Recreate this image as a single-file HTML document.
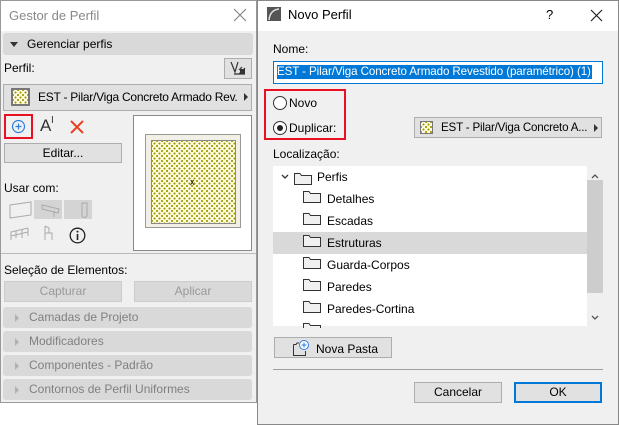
<!DOCTYPE html>
<html><head><meta charset="utf-8"><style>
*{box-sizing:border-box;margin:0;padding:0}
body{width:619px;height:425px;background:#fff;font-family:"Liberation Sans",sans-serif;font-size:12px;color:#000;position:relative;overflow:hidden}
.a{position:absolute}
.t{position:absolute;white-space:nowrap;line-height:14px}
.btn{position:absolute;background:#e1e1e1;border:1px solid #adadad;text-align:center;line-height:18px}
.hdr{position:absolute;left:3px;width:249px;height:21px;background:#d9d9d9;border-radius:3px;color:#808080;line-height:21px;padding-left:26px}
.hdr:before{content:"";position:absolute;left:12px;top:7px;border-left:4px solid #b0b0b0;border-top:4px solid transparent;border-bottom:4px solid transparent}
.pat{background-color:#fffbe0;background-image:radial-gradient(#9a9a00 0.9px,transparent 1.2px),radial-gradient(#9a9a00 0.9px,transparent 1.2px);background-size:5px 5px;background-position:0 0,2.5px 2.5px}
.row{position:absolute;left:273px;width:314px;height:22px}
</style></head><body>
<!-- left panel -->
<div class="a" style="left:0;top:0;width:257px;height:403px;background:#f0f0f0;border:1px solid #999"></div>
<div class="a" style="left:1px;top:1px;width:255px;height:30px;background:#fff"></div>
<div class="t" style="left:9px;top:9px;font-size:13px;color:#888">Gestor de Perfil</div>
<svg class="a" style="left:233px;top:8px" width="14" height="14"><path d="M1 1L13 13M13 1L1 13" stroke="#888" stroke-width="1.2"/></svg>
<div class="a" style="left:3px;top:33px;width:250px;height:22px;background:#d9d9d9;border-radius:3px"></div>
<div class="a" style="left:10px;top:42px;border-top:5px solid #333;border-left:4px solid transparent;border-right:4px solid transparent"></div>
<div class="t" style="left:27px;top:37px">Gerenciar perfis</div>
<div class="t" style="left:4px;top:61px">Perfil:</div>
<div class="btn" style="left:224px;top:58px;width:28px;height:21px"></div>
<svg class="a" style="left:229px;top:60px" width="20" height="17"><path d="M2 2L6 12L9 2M5 14H16M10 14L16 8M10 10L13 7" stroke="#333" fill="none" stroke-width="1.2"/><rect x="11" y="9" width="5" height="5" fill="#333"/></svg>
<div class="btn" style="left:3px;top:84px;width:249px;height:27px"></div>
<div class="a pat" style="left:11px;top:88px;width:19px;height:18px;border:2px solid #777"></div>
<div class="t" style="left:38px;top:90px;font-size:12px;letter-spacing:-0.25px;width:200px;overflow:hidden">EST - Pilar/Viga Concreto Armado Rev...</div>
<div class="a" style="left:244px;top:93px;border-left:4px solid #333;border-top:4px solid transparent;border-bottom:4px solid transparent"></div>
<div class="a" style="left:4px;top:114px;width:29px;height:25px;border:2px solid #e81123"></div>
<svg class="a" style="left:11px;top:119px" width="15" height="15"><circle cx="7.5" cy="7.5" r="6" stroke="#2f7de1" fill="none" stroke-width="1.2"/><path d="M7.5 4.5V10.5M4.5 7.5H10.5" stroke="#2f7de1" stroke-width="1.2"/></svg>
<div class="t" style="left:40px;top:119px;font-size:17px;color:#333">A</div>
<div class="t" style="left:51px;top:114px;font-size:10px;color:#333">I</div>
<svg class="a" style="left:70px;top:120px" width="14" height="14"><path d="M1 1L13 13M13 1L1 13" stroke="#e84020" stroke-width="2"/></svg>
<div class="btn" style="left:4px;top:143px;width:118px;height:20px">Editar...</div>
<div class="a" style="left:133px;top:115px;width:119px;height:136px;background:#fff;border:1px solid #888"></div>
<div class="a" style="left:145px;top:134px;width:96px;height:94px;background:#f2efe6;border:1px solid #999"></div>
<div class="a pat" style="left:151px;top:140px;width:85px;height:84px;border:1px solid #888"></div>
<div class="t" style="left:190px;top:175px;font-size:9px">x</div>
<div class="t" style="left:4px;top:181px">Usar com:</div>
<div class="a" style="left:34px;top:200px;width:28px;height:19px;background:#d4d4d4"></div>
<div class="a" style="left:64px;top:200px;width:28px;height:19px;background:#d4d4d4"></div>
<svg class="a" style="left:8px;top:200px" width="90" height="45" fill="none" stroke="#aaa"><path d="M2 5L23 2V15L2 18Z"/><path d="M34 5L51 9L50 13L34 9ZM46 11V17"/><path d="M74 3H79V16Q76.5 19 74 16Z"/><path d="M3 40V32L20 28M3 36L20 32M8 31V38M14 30V38M20 28V36"/><path d="M37 26V40M37 33H44V40M37 26L41 28V33"/></svg>
<svg class="a" style="left:69px;top:227px" width="17" height="17"><circle cx="8.5" cy="8.5" r="7.3" stroke="#222" fill="none" stroke-width="1.3"/><path d="M8.5 7V13" stroke="#222" stroke-width="1.6"/><circle cx="8.5" cy="4.6" r="1" fill="#222"/></svg>
<div class="a" style="left:1px;top:253px;width:255px;height:1px;background:#bbb"></div>
<div class="t" style="left:4px;top:263px">Seleção de Elementos:</div>
<div class="a" style="left:4px;top:281px;width:118px;height:21px;background:#d9d9d9;border:1px solid #ccc;color:#999;text-align:center;line-height:19px">Capturar</div>
<div class="a" style="left:134px;top:281px;width:118px;height:21px;background:#d9d9d9;border:1px solid #ccc;color:#999;text-align:center;line-height:19px">Aplicar</div>
<div class="hdr" style="top:307px">Camadas de Projeto</div>
<div class="hdr" style="top:331px">Modificadores</div>
<div class="hdr" style="top:355px">Componentes - Padrão</div>
<div class="hdr" style="top:379px">Contornos de Perfil Uniformes</div>
<!-- right dialog -->
<div class="a" style="left:257px;top:0;width:362px;height:425px;background:#f0f0f0;border:1px solid #888"></div>
<div class="a" style="left:258px;top:1px;width:360px;height:30px;background:#fff"></div>
<svg class="a" style="left:267px;top:7px" width="14" height="14"><rect width="14" height="14" fill="#555"/><path d="M2 13Q3 3 12 2" stroke="#ddd" fill="none" stroke-width="1.5"/></svg>
<div class="t" style="left:288px;top:8px;font-size:13px">Novo Perfil</div>
<div class="t" style="left:546px;top:8px;font-size:13px">?</div>
<svg class="a" style="left:590px;top:9px" width="13" height="13"><path d="M1 1L12 12M12 1L1 12" stroke="#222" stroke-width="1.2"/></svg>
<div class="t" style="left:273px;top:42px">Nome:</div>
<div class="a" style="left:273px;top:61px;width:330px;height:23px;background:#fff;border:1px solid #0078d7"></div>
<div class="t" style="left:277px;top:65px;background:#0078d7;color:#fff;font-size:11.6px;padding-right:1px;letter-spacing:-0.1px">EST - Pilar/Viga Concreto Armado Revestido (paramétrico) (1)</div>
<div class="a" style="left:264px;top:89px;width:82px;height:51px;border:2px solid #e81123"></div>
<div class="a" style="left:273px;top:96px;width:14px;height:14px;border-radius:50%;border:1px solid #333;background:#fff"></div>
<div class="t" style="left:289px;top:96px">Novo</div>
<div class="a" style="left:273px;top:121px;width:14px;height:14px;border-radius:50%;border:1px solid #333;background:#fff"></div>
<div class="a" style="left:277px;top:125px;width:6px;height:6px;border-radius:50%;background:#222"></div>
<div class="t" style="left:289px;top:121px">Duplicar:</div>
<div class="btn" style="left:414px;top:117px;width:188px;height:21px"></div>
<div class="a pat" style="left:420px;top:121px;width:13px;height:13px;border:1px solid #777"></div>
<div class="t" style="left:441px;top:121px;font-size:11.6px;letter-spacing:-0.2px;width:150px;overflow:hidden">EST - Pilar/Viga Concreto A...</div>
<div class="a" style="left:594px;top:124px;border-left:4px solid #333;border-top:4px solid transparent;border-bottom:4px solid transparent"></div>
<div class="t" style="left:273px;top:147px">Localização:</div>
<div class="a" style="left:273px;top:166px;width:330px;height:160px;background:#fff"></div>
<div class="a" style="left:587px;top:166px;width:16px;height:160px;background:#f0f0f0"></div>
<div class="a" style="left:587px;top:180px;width:16px;height:113px;background:#cdcdcd"></div>
<svg class="a" style="left:590px;top:170px" width="10" height="150" fill="none" stroke="#555" stroke-width="1.3"><path d="M2 8L5 5L8 8"/><path d="M2 146L5 149L8 146"/></svg>
<div class="row" style="top:232px;width:314px;background:#d9d9d9"></div>
<svg class="a" style="left:280px;top:170px" width="40" height="20" fill="#f0f0f0" stroke="#333" stroke-width="1"><path d="M2 5L5 8L8 5" fill="none" stroke-width="1.3"/>
<path d="M14.5 3.5H20L21.5 5.5H31.5V14.5H14.5Z"/></svg>
<svg class="a" style="left:300px;top:188px" width="30" height="140" fill="#f0f0f0" stroke="#333"><g id="f"><path d="M3.5 3.5H9L10.5 5.5H20.5V14.5H3.5Z"/></g><use href="#f" y="22"/><use href="#f" y="44"/><use href="#f" y="66"/><use href="#f" y="88"/><use href="#f" y="110"/><use href="#f" y="132"/></svg>
<div class="t" style="left:317px;top:170px">Perfis</div>
<div class="t" style="left:327px;top:192px">Detalhes</div>
<div class="t" style="left:327px;top:214px">Escadas</div>
<div class="t" style="left:327px;top:236px">Estruturas</div>
<div class="t" style="left:327px;top:258px">Guarda-Corpos</div>
<div class="t" style="left:327px;top:280px">Paredes</div>
<div class="t" style="left:327px;top:302px">Paredes-Cortina</div>
<div class="btn" style="left:274px;top:337px;width:118px;height:21px"></div>
<svg class="a" style="left:292px;top:339px" width="24" height="18"><path d="M1.5 5.5H4L5 4H7M1.5 5.5V16.5H13.5V12" fill="none" stroke="#333"/><circle cx="12" cy="6" r="4.5" fill="#fff" stroke="#2f7de1"/><path d="M12 3.5V8.5M9.5 6H14.5" stroke="#2f7de1"/></svg>
<div class="t" style="left:316px;top:342px">Nova Pasta</div>
<div class="a" style="left:273px;top:369px;width:330px;height:1px;background:#a0a0a0"></div>
<div class="btn" style="left:414px;top:382px;width:88px;height:21px">Cancelar</div>
<div class="btn" style="left:514px;top:382px;width:88px;height:21px;border:2px solid #0078d7;line-height:17px">OK</div>
</body></html>
